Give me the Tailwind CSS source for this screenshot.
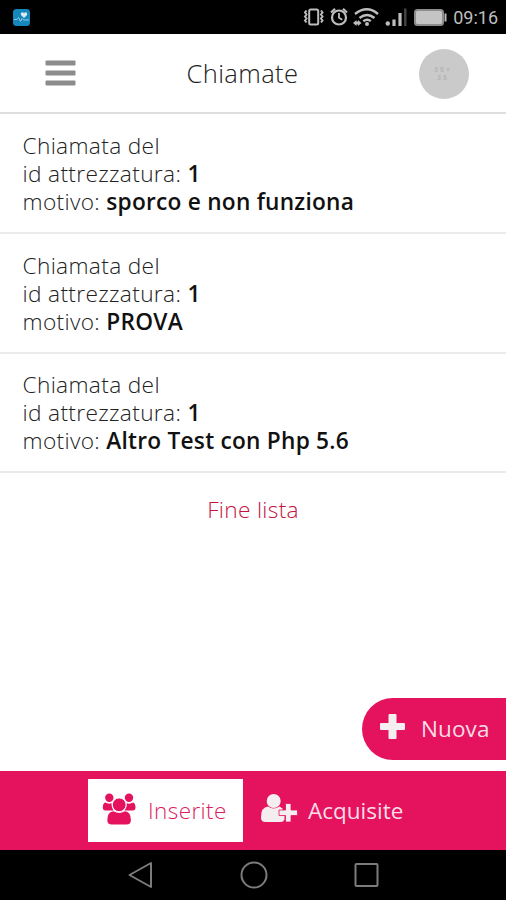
<!DOCTYPE html>
<html lang="it">
<head>
<meta charset="utf-8">
<title>Chiamate</title>
<script src="https://cdn.jsdelivr.net/npm/@tailwindcss/browser@4"></script>
</head>
<body class="w-[506px] h-[900px] overflow-hidden bg-white flex flex-col font-['Open_Sans',sans-serif] font-[340] text-[#222]">
  <!-- Status bar -->
  <div class="h-[34px] shrink-0 bg-black flex items-center justify-between pl-[13px] pr-2">
    <svg class="w-[17px] h-[17px]" viewBox="0 0 17 17"><rect width="17" height="17" rx="3.5" fill="#1687bd"/><path d="M11 9 8.200 6.200C6.800 4.400 9.200 2 11 4.200 12.800 2 15.200 4.400 13.800 6.200Z" fill="#dbe8ef"/><path d="M1 10.500h3l1.500-2 2 4 1.500-3 1.500 1.500H16" fill="none" stroke="#8fc6e2" stroke-width="1"/></svg>
    <div class="flex items-center">
      <svg class="w-[148px] h-[24px]" viewBox="302 5.500 148 24" fill="none" stroke="#bdbdbd">
        <rect x="309.200" y="10" width="9" height="15" rx="1.500" stroke-width="2"/>
        <path d="M306.500 11l-1.500 2 1.500 2-1.500 2 1.500 2-1.500 2 1.500 2M321 11l1.500 2-1.500 2 1.500 2-1.500 2 1.500 2-1.500 2" stroke-width="2"/>
        <circle cx="339" cy="18" r="7" stroke-width="2.200"/><path d="M339 13.500v4.800l3.300 2" stroke-width="1.800"/><path d="M331 13l4-3.700M347 13l-4-3.700" stroke-width="2.200"/>
        <path d="M355 14.500q12-9.500 23 0M359.500 18.500q7.500-6 15 0M363.300 21.700q4-3 7.500 0" stroke-width="2.400"/><circle cx="367" cy="24.500" r="2" fill="#bdbdbd" stroke="none"/><path d="M353 23.500l3.500-3v1.500h1.500v-1.500l3.500 3-3.500 3v-1.500h-1.500v1.500z" fill="#bdbdbd" stroke="none"/>
        <circle cx="387.800" cy="24" r="2.200" fill="#bdbdbd" stroke="none"/><path d="M394 26.500v-6.500M400 26.500v-13" stroke-width="3.200"/><path d="M405.300 26.500v-17.500" stroke="#444" stroke-width="2.400"/>
        <rect x="415" y="10.500" width="28" height="15" rx="2.500" fill="#c4c4c4" stroke="#8c8c8c" stroke-width="2"/><path d="M445.500 14v8" stroke-width="2"/>
      </svg>
      <span class="font-['Roboto',sans-serif] font-normal text-[18px] leading-6 text-[#bdbdbd] ml-[3px] mt-[2px]">09:16</span>
    </div>
  </div>
  <!-- Header -->
  <header class="h-[80px] shrink-0 border-b-2 border-[#dedede] grid grid-cols-3 items-center">
    <div class="pl-[45px]"><svg class="w-[31px] h-[26px]" viewBox="0 0 31 26" fill="#8c8c8c"><rect x=".5" y=".5" width="30" height="5" rx="1"/><rect x=".5" y="10.500" width="30" height="5" rx="1"/><rect x=".5" y="20.500" width="30" height="5" rx="1"/></svg></div>
    <h1 class="text-center text-[25.500px] leading-8 tracking-[0.4px] -ml-[21px] -mt-[1px]"><span>Chiamate</span></h1>
    <div class="flex justify-end pr-[37px] pt-[2px]"><div class="size-[50px] rounded-full bg-[#cacaca] flex flex-col items-center justify-center pr-[2px] font-bold text-[7px] leading-[8px] tracking-[2px] text-[#b5b5b5]"><span>35×</span><span>35</span></div></div>
  </header>
  <!-- Calls -->
  <ul class="shrink-0 text-[22.700px] leading-[28px] tracking-[0.34px] [&_b]:font-semibold [&_b]:text-[#111] [&_b]:tracking-[0.23px]">
    <li class="h-[120px] px-[22.500px] pt-[18px] border-b-2 border-[#ebebeb]"><p>Chiamata del</p><p>id attrezzatura: <b>1</b></p><p>motivo: <b>sporco e non funziona</b></p></li>
    <li class="h-[120px] px-[22.500px] pt-[18px] border-b-2 border-[#ebebeb]"><p>Chiamata del</p><p>id attrezzatura: <b>1</b></p><p>motivo: <b>PROVA</b></p></li>
    <li class="h-[119px] px-[22.500px] pt-[17px] border-b-2 border-[#ebebeb]"><p>Chiamata del</p><p>id attrezzatura: <b>1</b></p><p>motivo: <b>Altro Test con Php 5.6</b></p></li>
  </ul>
  <p class="text-center text-[22.700px] leading-7 tracking-[0.3px] mt-[23px] text-[#c4123f]"><span>Fine lista</span></p>
  <button class="mt-auto ml-auto mb-[11px] h-[62px] w-[144px] shrink-0 rounded-l-full bg-[#e5125d] flex items-center pl-[18px] text-[22.500px] tracking-[0.1px] text-[#fbdce7] font-normal">
    <svg class="w-[25px] h-[25px] -mt-[5px]" viewBox="0 0 25 25" fill="#f4eef0"><path d="M9.500 0h6a1 1 0 0 1 1 1v8h7.500a1 1 0 0 1 1 1v5a1 1 0 0 1-1 1h-7.500v8a1 1 0 0 1-1 1h-6a1 1 0 0 1-1-1v-8H1a1 1 0 0 1-1-1v-5a1 1 0 0 1 1-1h7.500V1a1 1 0 0 1 1-1z"/></svg>
    <span class="ml-[16px] -mt-[1px]">Nuova</span>
  </button>
  <!-- Tab bar -->
  <nav class="h-[79px] shrink-0 bg-[#e5125d] flex items-start pl-[88px] pt-2 text-[22.500px] leading-8">
    <div class="w-[155px] h-[63px] bg-white flex items-center pl-[14px] text-[#dc1c60]">
      <svg class="w-[34px] h-[32px] -mt-[3px]" viewBox="0 0 34 32" fill="#e5125d"><circle cx="7.300" cy="4.700" r="4.200"/><circle cx="27" cy="4.700" r="4.200"/><path d="M3 9.500q4 2 6.500.5-.2 4.500 2 7.500H3.500Q.8 17.500.8 14.500.8 10.500 3 9.500zM31.200 9.500q-4 2-6.500.5.200 4.500-2 7.500h8q2.800 0 2.800-3 0-4-2.300-5z"/><circle cx="17.200" cy="11.800" r="6.900" stroke="#fff" stroke-width="1"/><path d="M11.500 18.300q5.700 3.500 11.400 0 6 .7 6 8.700 0 4.500-4.500 4.500H9.800q-4.500 0-4.500-4.500 0-8 6.200-8.700z"/></svg>
      <span class="ml-[12px] tracking-[0.4px]">Inserite</span>
    </div>
    <div class="h-[63px] flex items-center pl-[18px] text-[#fbdce7] font-normal">
      <svg class="w-[37px] h-[29px] -mt-[4px]" viewBox="0 0 37 29"><path d="M7 12.500q5.500 4 11.500 0l3 2 2 8v3q-1 2.500-4 2.500H4.500Q0 28 0 23.500 0 13 7 12.500z" fill="#f4eef0"/><circle cx="12.700" cy="7" r="7" fill="#f4eef0"/><path d="M24.500 9.500h5.500v6.500h6.500v5.500H30v6.500h-5.500v-6.500H18v-5.500h6.500z" fill="#f4eef0" stroke="#e5125d" stroke-width=".8"/></svg>
      <span class="ml-[10px]">Acquisite</span>
    </div>
  </nav>
  <!-- System navigation -->
  <div class="h-[50px] shrink-0 bg-black flex justify-center items-center gap-[86px] pl-[1px]">
    <svg class="w-[26px] h-[28px]" viewBox="0 0 26 28" fill="none" stroke="#7c7c7c" stroke-width="2" stroke-linejoin="round"><path d="M1.500 14 23 2v24z"/></svg>
    <svg class="w-[28px] h-[28px]" viewBox="0 0 28 28" fill="none" stroke="#7c7c7c" stroke-width="2"><circle cx="14" cy="14" r="12.500"/></svg>
    <svg class="w-[26px] h-[28px]" viewBox="0 0 26 28" fill="none" stroke="#7c7c7c" stroke-width="2"><rect x="1.500" y="3" width="22" height="22" rx="1"/></svg>
  </div>
</body>
</html>
